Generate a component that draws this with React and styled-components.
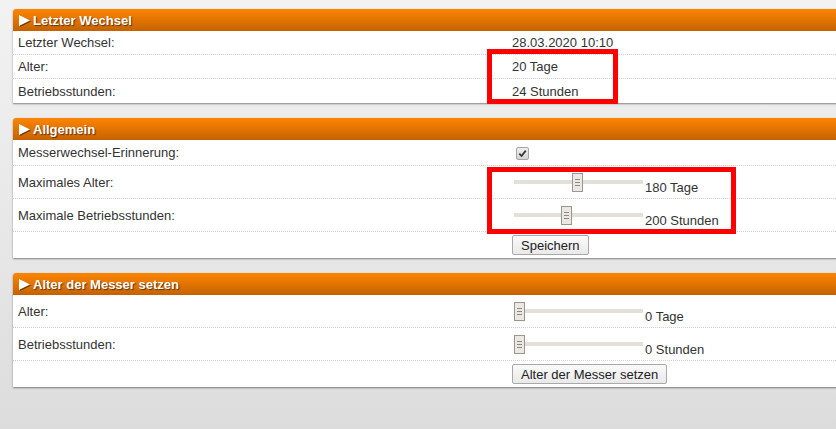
import styled, { createGlobalStyle } from 'styled-components';

const GlobalStyle = createGlobalStyle`
  html, body {
    margin: 0;
    height: 100%;
    overflow: hidden;
  }
  body {
    background: linear-gradient(to bottom, #f2f2f2 0%, #e6e6e6 60%, #dcdcdc 100%);
    font-family: "Liberation Sans", Arial, sans-serif;
    font-size: 13px;
    color: #333;
  }
`;

const Page = styled.div`
  position: relative;
  padding: 9px 0 0 13px;
  display: flex;
  flex-direction: column;
  gap: 15px;
`;

const Panel = styled.section`
  margin-right: -40px;
  background: #fff;
  border-radius: 3px 3px 0 0;
  box-shadow: 0 1px 2px rgba(0, 0, 0, 0.45);
`;

const PanelHeader = styled.div`
  display: flex;
  align-items: center;
  height: 22px;
  padding-left: 6px;
  border-radius: 3px 3px 0 0;
  background: linear-gradient(to bottom, #fd8500 0%, #e27400 50%, #c46200 100%);
  color: #fff;
  font-weight: bold;
  font-size: 13px;
  text-shadow: 1px 1px 1px rgba(0, 0, 0, 0.55);

  svg {
    margin-right: 3px;
    filter: drop-shadow(1px 1px 0.5px rgba(0, 0, 0, 0.5));
  }
`;

const Row = styled.div`
  display: grid;
  grid-template-columns: 499px 1fr;
  align-items: center;
  height: ${(p) => p.$h}px;
  box-sizing: border-box;
  border-bottom: ${(p) => (p.$last ? 'none' : '1px dotted #cfcfcf')};
`;

const Label = styled.div`
  padding-left: 5px;
`;

const Value = styled.div`
  display: flex;
  align-items: center;
`;

const CheckBox = styled.span`
  display: inline-flex;
  align-items: center;
  justify-content: center;
  width: 11px;
  height: 11px;
  margin: 1px 0 0 4px;
  border: 1px solid #a5a5a5;
  border-radius: 2px;
  background: linear-gradient(to bottom, #f0f0f0, #d4d4d4);
`;

const SliderField = styled.div`
  display: inline-flex;
  align-items: flex-end;
`;

const Track = styled.div`
  position: relative;
  width: 129px;
  height: 19px;
  margin-left: 2px;

  &::before {
    content: '';
    position: absolute;
    left: 0;
    right: 0;
    top: 7px;
    height: 4px;
    background: #e3dfd9;
  }
`;

const Thumb = styled.div`
  position: absolute;
  top: 0;
  width: 9px;
  height: 17px;
  border: 1px solid #9b9690;
  background: #ebe8e4;
  display: flex;
  flex-direction: column;
  align-items: center;
  justify-content: center;
  gap: 2px;

  span {
    width: 5px;
    height: 1px;
    background: #8d8a86;
  }
`;

const SliderText = styled.span`
  margin-left: 2px;
  line-height: 15px;
  margin-bottom: -3px;
`;

const Button = styled.button`
  font-family: "Liberation Sans", Arial, sans-serif;
  font-size: 13px;
  color: #222;
  height: 20px;
  padding: 0 8px;
  border: 1px solid #a9a9a9;
  border-radius: 2px;
  background: linear-gradient(to bottom, #fafafa, #e9e9e9);
`;

const Marker = styled.div`
  position: absolute;
  border: 5px solid #ff0000;
  box-sizing: border-box;
  pointer-events: none;
`;

const Slider = ({ value, max, unit }) => (
  <SliderField>
    <Track>
      <Thumb style={{ left: `${(value / max) * 118}px` }}>
        <span />
        <span />
        <span />
      </Thumb>
    </Track>
    <SliderText>
      {value} {unit}
    </SliderText>
  </SliderField>
);

const Header = ({ children }) => (
  <PanelHeader>
    <svg width="11" height="11" viewBox="0 0 11 11">
      <polygon points="0,0 11,5.5 0,11" fill="#fff" />
    </svg>
    {children}
  </PanelHeader>
);

const App = () => (
  <>
    <GlobalStyle />
    <Page>
      <Panel>
        <Header>Letzter Wechsel</Header>
        <Row $h={24}>
          <Label>Letzter Wechsel:</Label>
          <Value>28.03.2020 10:10</Value>
        </Row>
        <Row $h={24}>
          <Label>Alter:</Label>
          <Value>20 Tage</Value>
        </Row>
        <Row $h={24} $last>
          <Label>Betriebsstunden:</Label>
          <Value>24 Stunden</Value>
        </Row>
      </Panel>

      <Panel>
        <Header>Allgemein</Header>
        <Row $h={26}>
          <Label>Messerwechsel-Erinnerung:</Label>
          <Value>
            <CheckBox>
              <svg width="9" height="9" viewBox="0 0 10 10">
                <path d="M1.5 5.2 L4 7.8 L8.6 1.8" fill="none" stroke="#333" strokeWidth="1.9" />
              </svg>
            </CheckBox>
          </Value>
        </Row>
        <Row $h={33}>
          <Label>Maximales Alter:</Label>
          <Value>
            <Slider value={180} max={365} unit="Tage" />
          </Value>
        </Row>
        <Row $h={33}>
          <Label>Maximale Betriebsstunden:</Label>
          <Value>
            <Slider value={200} max={500} unit="Stunden" />
          </Value>
        </Row>
        <Row $h={26} $last>
          <Label />
          <Value>
            <Button>Speichern</Button>
          </Value>
        </Row>
      </Panel>

      <Panel>
        <Header>Alter der Messer setzen</Header>
        <Row $h={33}>
          <Label>Alter:</Label>
          <Value>
            <Slider value={0} max={365} unit="Tage" />
          </Value>
        </Row>
        <Row $h={33}>
          <Label>Betriebsstunden:</Label>
          <Value>
            <Slider value={0} max={500} unit="Stunden" />
          </Value>
        </Row>
        <Row $h={26} $last>
          <Label />
          <Value>
            <Button>Alter der Messer setzen</Button>
          </Value>
        </Row>
      </Panel>

      <Marker style={{ left: 487, top: 49, width: 131, height: 55 }} />
      <Marker style={{ left: 487, top: 167, width: 249, height: 67 }} />
    </Page>
  </>
);

export default App;
